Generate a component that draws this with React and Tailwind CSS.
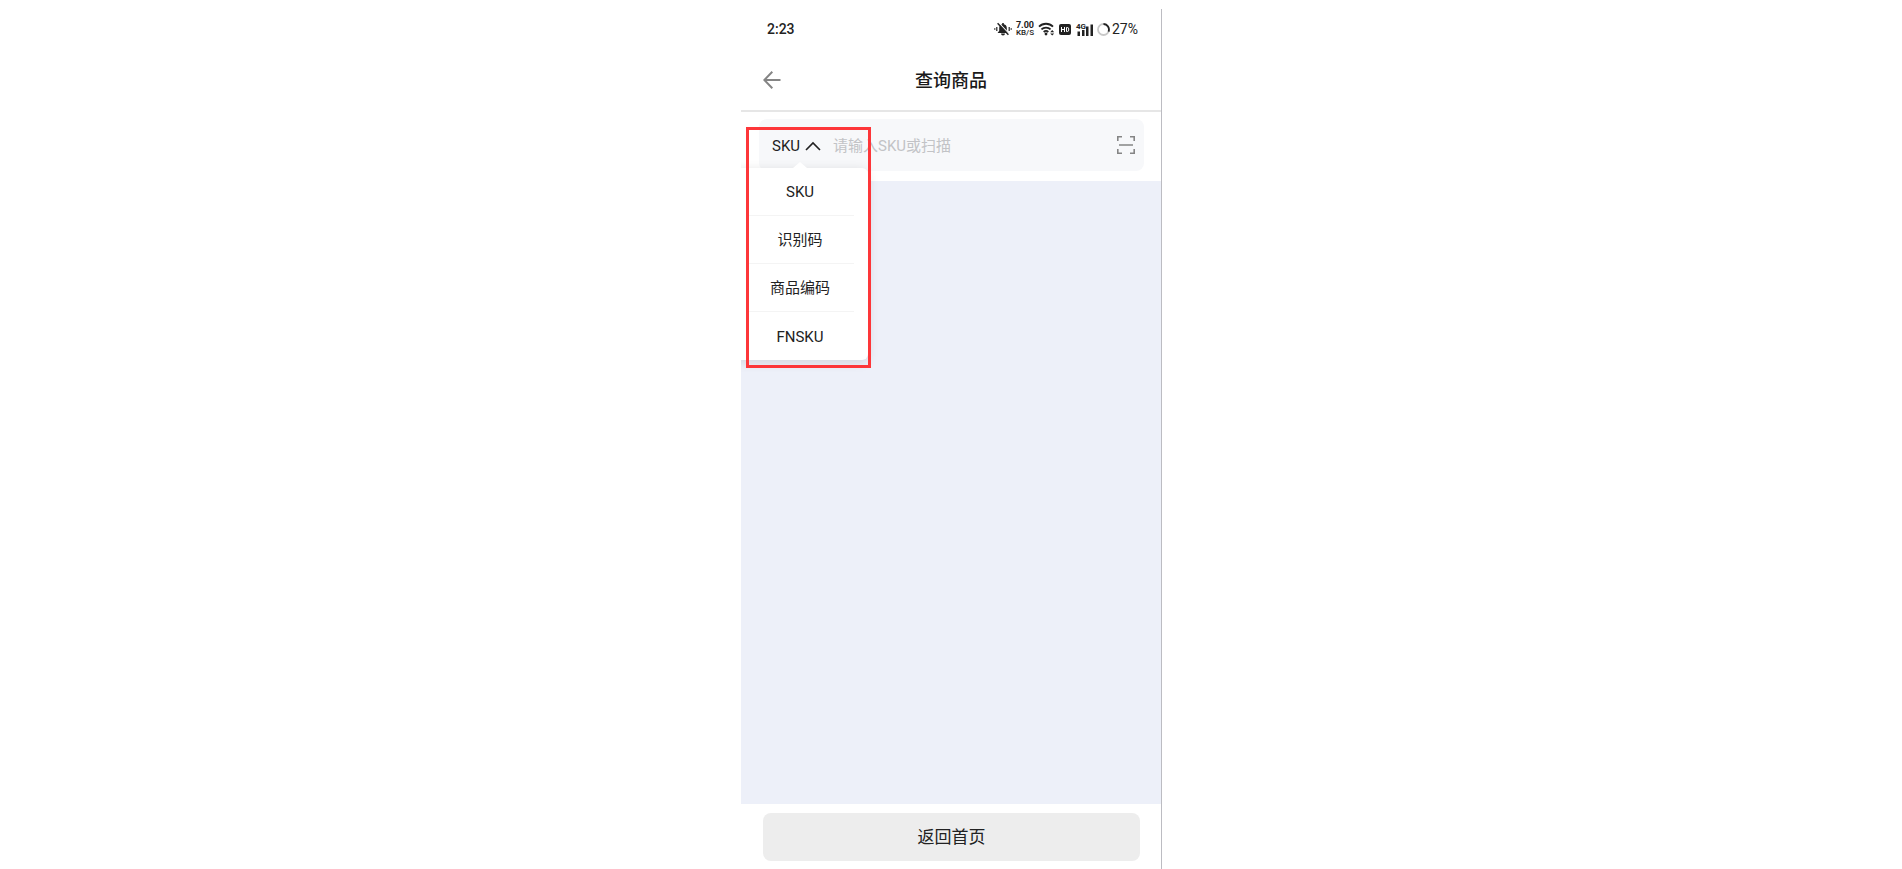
import { useState } from 'react';

const SEARCH_TYPES = ['SKU', '识别码', '商品编码', 'FNSKU'];

// ==========================================
// ICONS
// ==========================================
const MuteIcon = () => (
  <svg width="18" height="14" viewBox="0 0 18 14" fill="none" aria-hidden="true">
    <path d="M3.6 11h10.8l-1.6-2.2V6a3.8 3.8 0 0 0-7.6 0v2.8z" fill="#222" />
    <path d="M7 11.5h4a2 2 0 0 1-4 0zM8.2 1h1.6v2H8.2z" fill="#222" />
    <path d="M4.8 .8l10.4 11" stroke="#fff" strokeWidth="1.2" />
    <path d="M3.6 1.2l10.8 11.6" stroke="#222" strokeWidth="1.5" />
    <path d="M2.8 5v4M.8 6.2v1.6M15.2 5v4M17.2 6.2v1.6" stroke="#222" strokeWidth="1.2" />
  </svg>
);

const WifiIcon = () => (
  <svg width="17" height="14" viewBox="0 0 17 14" fill="none" aria-hidden="true">
    <path d="M1 4.6a10 10 0 0 1 14 0M3.4 7.4a6.6 6.6 0 0 1 9.2 0M5.7 10a3.3 3.3 0 0 1 4.6 0" stroke="#222" strokeWidth="1.8" />
    <circle cx="8" cy="12" r="1.4" fill="#222" />
    <path d="M12.2 10.2l2-2.2 2 2.2zM12.2 11.4l2 2.2 2-2.2z" fill="#222" />
  </svg>
);

const HdIcon = () => (
  <svg width="12" height="11" viewBox="0 0 12 11" fill="none" aria-hidden="true">
    <rect width="12" height="11" rx="2" fill="#222" />
    <path d="M2.5 3v5M5.5 3v5M2.5 5.5h3M7.5 3.5v4h.8a1.4 1.4 0 0 0 1.4-1.4V4.9a1.4 1.4 0 0 0-1.4-1.4z" stroke="#fff" strokeWidth="1" />
  </svg>
);

const SignalIcon = () => (
  <svg width="17" height="13" viewBox="0 0 17 13" aria-hidden="true">
    <path d="M1.5 8.5H4V13H1.5zM6 7h2.5v6H6zM10 3.5h2.5V13H10zM14.5 1.5H17V13h-2.5z" fill="#222" />
  </svg>
);

const BatteryIcon = () => (
  <svg width="13" height="13" viewBox="0 0 13 13" fill="none" aria-hidden="true">
    <circle cx="6.5" cy="6.5" r="5.5" stroke="#c9c9c9" strokeWidth="1.8" />
    <path d="M6.5 1a5.5 5.5 0 0 1 5 7.6" stroke="#222" strokeWidth="1.8" />
  </svg>
);

const BackIcon = () => (
  <svg width="18" height="18" viewBox="0 0 18 18" fill="none" stroke="#858585" strokeWidth="2" aria-hidden="true">
    <path d="M17.5 9H1.5M9.3 .8L1.3 9l8 8.2" />
  </svg>
);

const ScanIcon = () => (
  <svg width="18" height="18" viewBox="0 0 18 18" fill="none" stroke="#858585" strokeWidth="1.6" aria-hidden="true">
    <path d="M.8 5V.8H5M13 .8h4.2V5M.8 13v4.2H5M13 17.2h4.2V13M2 9h14" />
  </svg>
);

const StatusBar = () => (
  <div className="flex h-10 items-center justify-between pr-[23px] pl-[26px] text-[#222]">
    <span className="text-sm font-medium">2:23</span>
    <div className="flex items-center gap-1">
      <MuteIcon />
      <div className="flex flex-col items-center">
        <span className="text-[9px] leading-[7px] font-bold">7.00</span>
        <span className="text-[8px] leading-[7px] font-medium">KB/S</span>
      </div>
      <WifiIcon />
      <HdIcon />
      <div className="relative ml-px">
        <SignalIcon />
        <span className="absolute top-0 left-0 text-[8px] leading-[8px] font-bold">4G</span>
      </div>
      <div className="flex items-center gap-0.5">
        <BatteryIcon />
        <span className="text-sm">27%</span>
      </div>
    </div>
  </div>
);

const App = () => {
  const [searchType, setSearchType] = useState('SKU');
  const [isOpen, setIsOpen] = useState(true);
  const [keyword, setKeyword] = useState('');

  const handleSelect = (type) => {
    setSearchType(type);
    setIsOpen(false);
  };

  return (
    <div className="flex min-h-screen flex-col bg-white pt-[9px] pl-px font-[Roboto,'Noto_Sans_CJK_SC',sans-serif]">
      <main className="relative mx-auto flex w-full max-w-[421px] flex-grow flex-col overflow-hidden border-r border-[#bcbcc2]">
        <StatusBar />

        <header className="grid h-[63px] grid-cols-3 items-center border-b-2 border-[#e6e6e6] px-[22px]">
          <button type="button" aria-label="返回" className="justify-self-start">
            <BackIcon />
          </button>
          <h1 className="pt-0.5 text-center text-lg font-medium text-[#1a1a1a]">查询商品</h1>
        </header>

        {/* Search box with type selector */}
        <div className="relative bg-white pt-[7px] pr-[17px] pb-[10px] pl-[18px]">
          <div className="flex h-[52px] items-center rounded-lg bg-[#f7f8fa] pr-[9px] pl-[13px]">
            <button
              type="button"
              aria-expanded={isOpen}
              onClick={() => setIsOpen(!isOpen)}
              className="flex items-center gap-[5px] pt-0.5 text-[15px] text-[#222]"
            >
              {searchType}
              <svg width="16" height="10" viewBox="0 0 16 10" fill="none" stroke="#222" strokeWidth="1.6" aria-hidden="true">
                <path d={isOpen ? 'M1 9l7-7 7 7' : 'M1 1l7 7 7-7'} />
              </svg>
            </button>
            <input
              type="text"
              aria-label="搜索"
              value={keyword}
              onChange={(e) => setKeyword(e.target.value)}
              placeholder="请输入SKU或扫描"
              className="ml-3 min-w-0 flex-grow bg-transparent pt-0.5 text-[15px] text-[#222] outline-none placeholder:text-[#c2c3c6]"
            />
            <button type="button" aria-label="扫描">
              <ScanIcon />
            </button>
          </div>

          {isOpen && (
            <div className="absolute top-14 -left-[9px] z-10 w-[136px] rounded-md bg-white px-3.5 shadow-[0_2px_12px_rgba(0,0,0,0.12)]">
              <div className="absolute -top-1.5 left-[61px] border-x-[7px] border-b-[6px] border-x-transparent border-b-white"></div>
              <ul>
                {SEARCH_TYPES.map((type) => (
                  <li key={type} className="h-12 border-b border-[#f4f4f4] last:border-b-0">
                    <button
                      type="button"
                      onClick={() => handleSelect(type)}
                      className="block h-full w-full pt-0.5 text-center text-[15px] text-[#222]"
                    >
                      {type}
                    </button>
                  </li>
                ))}
              </ul>
            </div>
          )}
        </div>

        <section className="flex-grow bg-[#edf0f9]"></section>

        <footer className="bg-white pt-[9px] pr-[21px] pb-2 pl-[22px]">
          <button type="button" className="h-12 w-full rounded-lg bg-[#ededed] pt-0.5 text-[17px] text-[#222]">
            返回首页
          </button>
        </footer>

        {/* Highlight frame around the type menu */}
        <div className="pointer-events-none absolute top-[118px] left-[5px] z-20 h-[241px] w-[125px] border-3 border-[#fd3639]"></div>
      </main>
    </div>
  );
};

export default App;
